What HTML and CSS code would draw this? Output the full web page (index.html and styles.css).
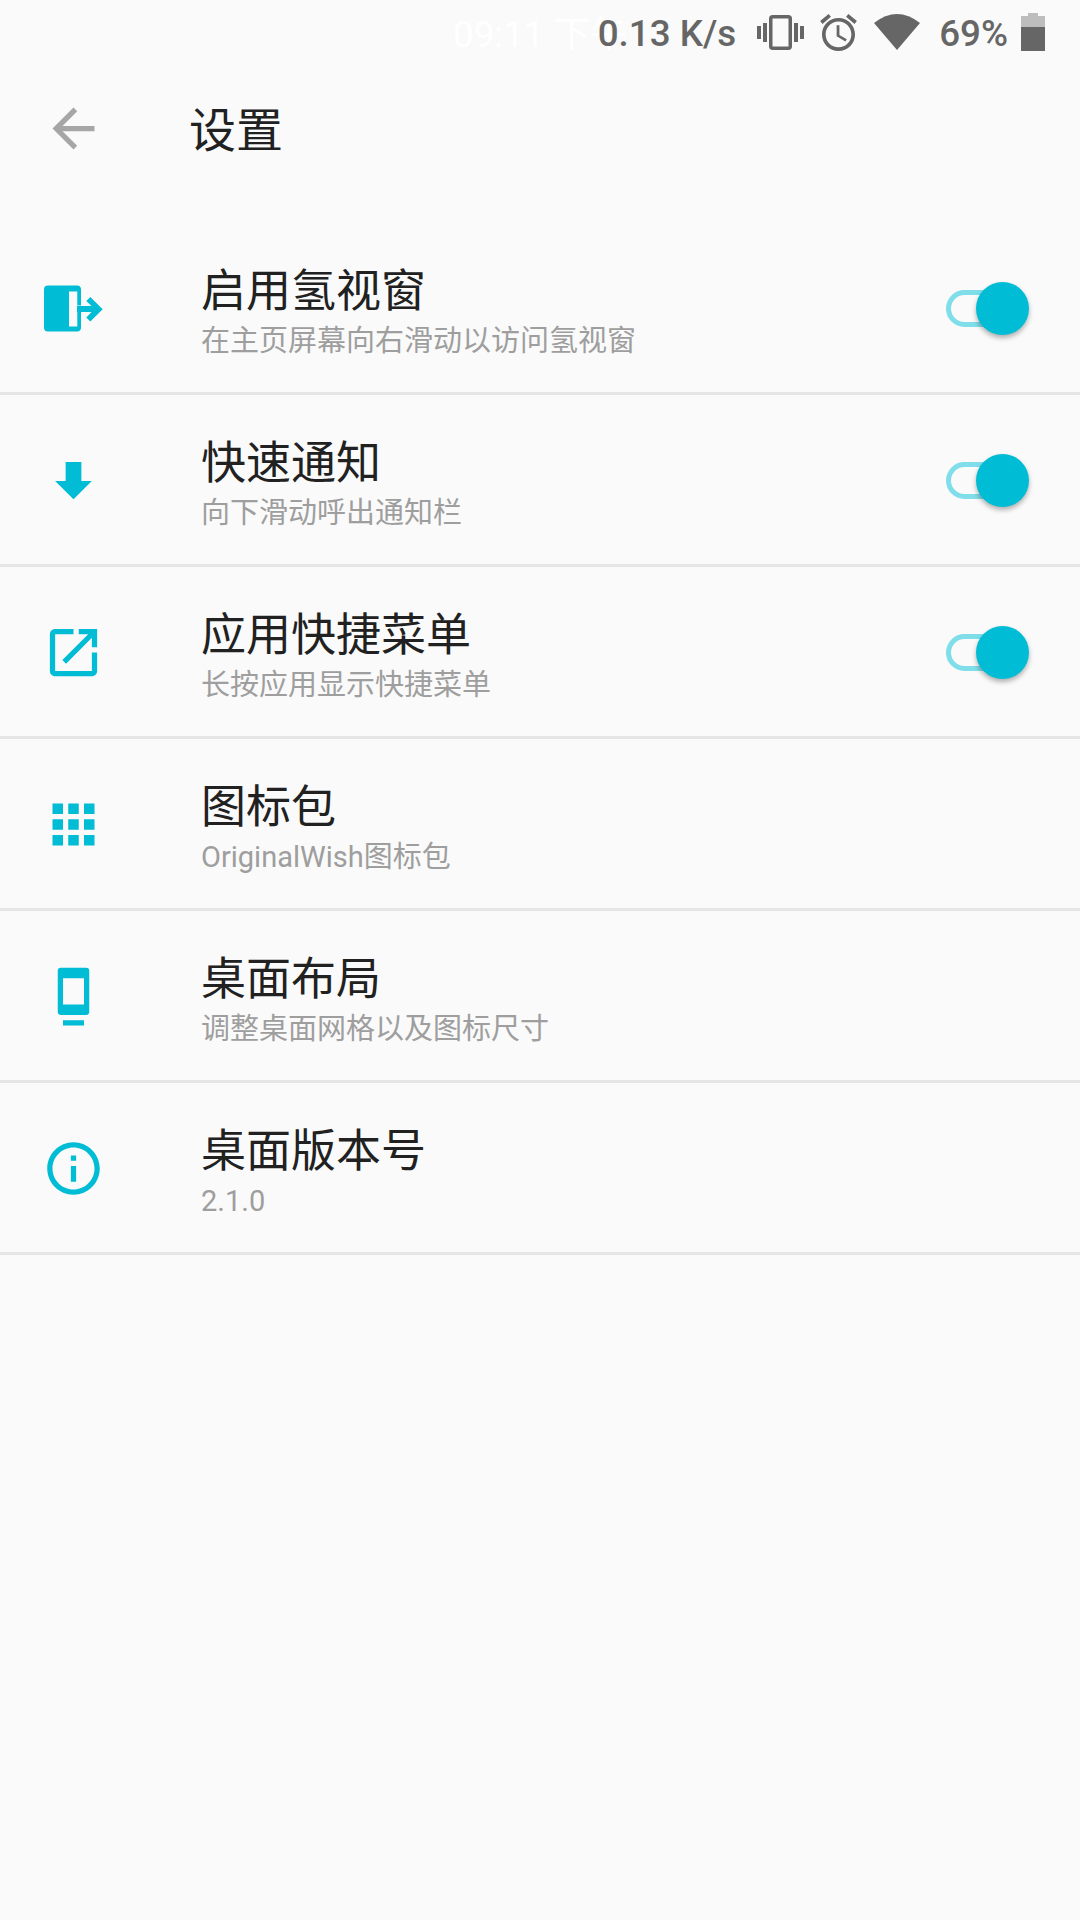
FILE: index.html
```html
<!DOCTYPE html>
<html lang="zh-CN">
  <head>
    <meta charset="UTF-8" />
    <meta name="viewport" content="width=device-width, initial-scale=1.0" />
    <title>设置</title>
    <link rel="stylesheet" href="styles.css">
  </head>
  <body>
    <div class="status-bar">
      <span class="status-bar__time">09:11 下午</span>
      <span class="status-bar__speed">0.13 K/s</span>
      <svg class="status-bar__vibrate" width="47" height="35" viewBox="0 0 47 35">
        <rect x="13.750" y="1.750" width="19.500" height="31.500" rx="2" fill="none" stroke="#666" stroke-width="3.500" />
        <path d="M0 11h4v13H0zM6 8h4v19H6zM37 8h4v19h-4zM43 11h4v13h-4z" fill="#666" />
      </svg>
      <svg class="status-bar__alarm" width="37" height="37" viewBox="2 1.860 20 20.140">
        <path d="M22 5.720l-4.600-3.860-1.290 1.530 4.600 3.860L22 5.720zM7.880 3.390L6.600 1.860 2 5.710l1.290 1.530 4.590-3.850zM12.500 8H11v6l4.750 2.850.75-1.230-4-2.370V8zM12 4c-4.970 0-9 4.030-9 9s4.030 9 9 9 9-4.030 9-9-4.030-9-9-9zm0 16c-3.870 0-7-3.130-7-7s3.130-7 7-7 7 3.130 7 7-3.130 7-7 7z" fill="#666" />
      </svg>
      <svg class="status-bar__wifi" width="46" height="36" viewBox="0 0 46 36">
        <path d="M0 9Q23 -9 46 9L23 36z" fill="#666" />
      </svg>
      <span class="status-bar__level">69%</span>
      <svg class="status-bar__battery" width="24" height="38" viewBox="0 0 24 38">
        <path d="M0 3h7V0h10v3h7v11H0z" fill="#bdbdbd" />
        <rect x="0" y="14" width="24" height="24" fill="#666" />
      </svg>
    </div>

    <header class="toolbar">
      <svg class="toolbar__back" width="63" height="63" viewBox="0 0 24 24">
        <path d="M20 11H7.830l5.590-5.590L12 4l-8 8 8 8 1.410-1.410L7.830 13H20v-2z" />
      </svg>
      <h1 class="toolbar__title">设置</h1>
    </header>

    <ul class="settings">
      <li class="settings__row">
        <svg class="settings__icon" width="63" height="63" viewBox="0 0 63 63">
          <path d="M6 8.500h29a4 4 0 0 1 4 4v16h-3.700v-14H27v35h8.300v-15H39v16a4 4 0 0 1-4 4H6a4 4 0 0 1-4-4v-38a4 4 0 0 1 4-4z" />
          <path d="M48.300 20L60.700 32.200 48.300 44.600 44.300 40.400 49.500 35H35V29H49.500L44.300 24z" />
        </svg>
        <div class="settings__text">
          <div class="settings__title">启用氢视窗</div>
          <div class="settings__sub">在主页屏幕向右滑动以访问氢视窗</div>
        </div>
        <div class="switch"><span class="switch__track"></span><span class="switch__thumb"></span></div>
      </li>
      <li class="settings__row">
        <svg class="settings__icon" width="63" height="63" viewBox="0 0 24 24">
          <path d="M19 12.200h-4V4.950H9v7.250H5l7 6.900 7-6.900z" />
        </svg>
        <div class="settings__text">
          <div class="settings__title">快速通知</div>
          <div class="settings__sub">向下滑动呼出通知栏</div>
        </div>
        <div class="switch"><span class="switch__track"></span><span class="switch__thumb"></span></div>
      </li>
      <li class="settings__row">
        <svg class="settings__icon" width="63" height="63" viewBox="0 0 24 24">
          <path d="M19 19H5V5h7V3H5c-1.110 0-2 .9-2 2v14c0 1.100.89 2 2 2h14c1.100 0 2-.9 2-2v-7h-2v7zM14 3v2h3.590l-9.830 9.830 1.410 1.410L19 6.410V10h2V3h-7z" />
        </svg>
        <div class="settings__text">
          <div class="settings__title">应用快捷菜单</div>
          <div class="settings__sub">长按应用显示快捷菜单</div>
        </div>
        <div class="switch"><span class="switch__track"></span><span class="switch__thumb"></span></div>
      </li>
      <li class="settings__row">
        <svg class="settings__icon" width="63" height="63" viewBox="0 0 24 24">
          <path d="M4 8h4V4H4v4zm6 12h4v-4h-4v4zm-6 0h4v-4H4v4zm0-6h4v-4H4v4zm6 0h4v-4h-4v4zm6-10v4h4V4h-4zm-6 4h4V4h-4v4zm6 6h4v-4h-4v4zm0 6h4v-4h-4v4z" />
        </svg>
        <div class="settings__text">
          <div class="settings__title">图标包</div>
          <div class="settings__sub">OriginalWish图标包</div>
        </div>
      </li>
      <li class="settings__row">
        <svg class="settings__icon" width="63" height="63" viewBox="0 0 24 24">
          <path fill-rule="evenodd" d="M7.200 1h9.600A1.200 1.200 0 0 1 18 2.200v15.600a1.200 1.200 0 0 1-1.200 1.200H7.200A1.200 1.200 0 0 1 6 17.800V2.200A1.200 1.200 0 0 1 7.200 1zM8 5v10h8V5zM8 21h8v2H8z" />
        </svg>
        <div class="settings__text">
          <div class="settings__title">桌面布局</div>
          <div class="settings__sub">调整桌面网格以及图标尺寸</div>
        </div>
      </li>
      <li class="settings__row">
        <svg class="settings__icon" width="63" height="63" viewBox="0 0 24 24">
          <path d="M11 7h2v2h-2zm0 4h2v6h-2zm1-9C6.480 2 2 6.480 2 12s4.480 10 10 10 10-4.480 10-10S17.520 2 12 2zm0 18c-4.410 0-8-3.590-8-8s3.590-8 8-8 8 3.590 8 8-3.590 8-8 8z" />
        </svg>
        <div class="settings__text">
          <div class="settings__title">桌面版本号</div>
          <div class="settings__sub">2.1.0</div>
        </div>
      </li>
    </ul>
  </body>
</html>
```

FILE: styles.css
```css
* {
  box-sizing: border-box;
  margin: 0;
  padding: 0;
}
html,
body {
  width: 100%;
  height: 100%;
}
body {
  background-color: #fafafa;
  color: #212121;
  font-family: Roboto, "Noto Sans CJK SC", sans-serif;
}

.status-bar {
  position: relative;
  display: flex;
  justify-content: flex-end;
  align-items: center;
  height: 64px;
  padding-right: 35px;
  color: #666;
  font-size: 36.75px;
  font-weight: 500;
}
/* clock runs underneath the network speed */
.status-bar__time {
  position: absolute;
  top: 4px;
  left: 453px;
  color: #fff;
  font-weight: 400;
  white-space: nowrap;
}
.status-bar__speed {
  position: relative;
  padding-top: 2px;
}
.status-bar__vibrate {
  margin-left: 21px;
}
.status-bar__alarm {
  margin-left: 16px;
}
.status-bar__wifi {
  margin-left: 17px;
}
.status-bar__level {
  margin-left: 19px;
  padding-top: 2px;
}
.status-bar__battery {
  margin-left: 13px;
}

.toolbar {
  display: flex;
  align-items: center;
  height: 128px;
  padding-left: 42px;
}
.toolbar__back {
  fill: #a6a6a6;
  margin-right: 84px;
}
.toolbar__title {
  margin-bottom: 4px;
  font-size: 47px;
  font-weight: 400;
}

.settings {
  list-style: none;
  padding-top: 31px;
}
.settings__row {
  display: flex;
  align-items: center;
  height: 172px;
  padding: 1px 51px 0 42px;
  border-bottom: 3px solid #e5e5e5;
}
.settings__icon {
  flex-shrink: 0;
  fill: #00bcd4;
  margin-right: 96px;
}
.settings__text {
  flex-grow: 1;
  padding-top: 10px;
}
.settings__title {
  font-size: 45px;
  line-height: 56px;
}
.settings__sub {
  color: #9e9e9e;
  font-size: 29px;
  line-height: 42px;
}

.switch {
  position: relative;
  display: flex;
  align-items: center;
  width: 83px;
  height: 53px;
}
.switch__track {
  width: 62px;
  height: 37px;
  border: 5px solid #80deea;
  border-radius: 19px;
}
.switch__thumb {
  position: absolute;
  top: 0;
  right: 0;
  width: 53px;
  height: 53px;
  border-radius: 50%;
  background-color: #00bcd4;
  box-shadow: 0 3px 5px rgba(0, 0, 0, 0.3);
}
```
